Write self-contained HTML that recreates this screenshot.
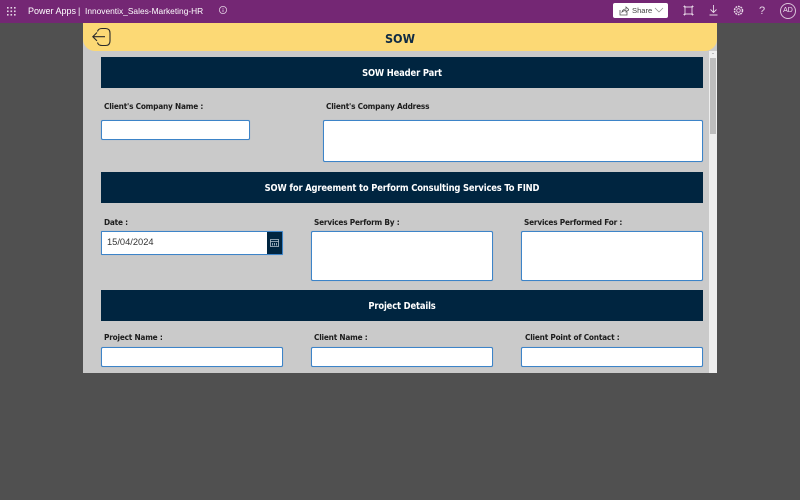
<!DOCTYPE html>
<html><head><meta charset="utf-8">
<style>
*{box-sizing:border-box;margin:0;padding:0}
html,body{width:800px;height:500px;overflow:hidden;background:#505050;font-family:"Liberation Sans",sans-serif}
.a{position:absolute}
.bar{position:absolute;left:101px;width:602px;background:#002540;color:#fff;font-family:"DejaVu Sans Condensed","DejaVu Sans",sans-serif;font-stretch:condensed;font-weight:bold;font-size:9.300px;letter-spacing:-.14px;text-align:center}
.lbl{position:absolute;font-family:"DejaVu Sans Condensed","DejaVu Sans",sans-serif;font-stretch:condensed;font-weight:bold;font-size:8.200px;letter-spacing:-.2px;color:#1c1c1c;line-height:12px;white-space:nowrap}
.in{position:absolute;background:#fff;border:1px solid #3d84c8;border-radius:2px;box-shadow:0 0 .5px #3d84c8}
</style></head>
<body>
<div class="a" style="left:0;top:0;width:800px;height:23px;background:#742774"></div>
<svg class="a" style="left:7px;top:7px" width="9" height="9" fill="#e6d6e6"><rect x="0" y="0" width="1.6" height="1.6"/><rect x="3.5" y="0" width="1.6" height="1.6"/><rect x="7" y="0" width="1.6" height="1.6"/><rect x="0" y="3.5" width="1.6" height="1.6"/><rect x="3.5" y="3.5" width="1.6" height="1.6"/><rect x="7" y="3.5" width="1.6" height="1.6"/><rect x="0" y="7" width="1.6" height="1.6"/><rect x="3.5" y="7" width="1.6" height="1.6"/><rect x="7" y="7" width="1.6" height="1.6"/></svg>
<div class="a" style="left:28px;top:5px;font-size:9px;line-height:12px;color:#fff;white-space:nowrap">Power Apps</div>
<div class="a" style="left:78px;top:5px;font-size:9px;line-height:12px;color:#fff">|</div>
<div class="a" style="left:85px;top:5px;font-size:8.400px;line-height:12px;color:#fff;white-space:nowrap">Innoventix_Sales-Marketing-HR</div>
<svg class="a" style="left:218px;top:5px" width="10" height="10" fill="none" stroke="#e0cce0" stroke-width=".8"><circle cx="5" cy="5" r="3.6"/><path d="M5 4.500v2.600M5 2.900v.9"/></svg>
<div class="a" style="left:613px;top:3px;width:55px;height:15px;background:#fff;border-radius:2px"></div>
<svg class="a" style="left:619px;top:6px" width="10" height="10" fill="none" stroke="#555" stroke-width=".8"><path d="M1 4v5h7V6M3 6c.5-2 2-3 4-3V1l3 2.700L7 6V4.500C5.500 4.500 4 5 3 6z"/></svg>
<div class="a" style="left:632px;top:5px;font-size:7.600px;line-height:12px;color:#444">Share</div>
<svg class="a" style="left:654px;top:7px" width="10" height="7" fill="none" stroke="#888" stroke-width=".7"><path d="M1 1l4 4 4-4"/></svg>
<svg class="a" style="left:683px;top:5px" width="11" height="11" fill="none" stroke="#e6d6e6" stroke-width=".9"><path d="M2 2h7v7H2z"/><path d="M.500 1.500h2M1.500.500v2M8.500 1.500h2M9.500.500v2M.500 9.500h2M1.500 8.500v2M8.500 9.500h2M9.500 8.500v2"/></svg>
<svg class="a" style="left:708px;top:5px" width="11" height="11" fill="none" stroke="#e6d6e6" stroke-width=".9"><path d="M5.500 0v7M2.500 4.500l3 3 3-3M1.500 10h8"/></svg>
<svg class="a" style="left:733px;top:5px" width="11" height="11" fill="none" stroke="#e6d6e6" stroke-width=".9"><circle cx="5.500" cy="5.500" r="1.800"/><circle cx="5.500" cy="5.500" r="4" stroke-dasharray="1.800 .8" stroke-width="1.500"/></svg>
<div class="a" style="left:759px;top:5px;font-size:11px;line-height:13px;color:#e6d6e6">?</div>
<div class="a" style="left:780px;top:3px;width:16px;height:16px;border:1px solid #d9c3d9;border-radius:50%;font-size:7px;line-height:14px;text-align:center;color:#f0e4f0">AD</div>

<div class="a" style="left:83px;top:23px;width:634px;height:350px;background:#cacaca"></div>
<div class="a" style="left:83px;top:23px;width:634px;height:28px;background:#fcd975;border-bottom-left-radius:12px;border-bottom-right-radius:12px"></div>
<svg class="a" style="left:91px;top:27px" width="21" height="21" fill="none" stroke="#2a2a2a" stroke-width="1.100"><path d="M6.500 4.500C7 2.500 8.500 1.500 11 1.500h3.500c3 0 4.500 1.500 4.500 4.500v8c0 3-1.500 4.500-4.500 4.500H11c-2.500 0-4-1-4.500-3"/><path d="M14 9.700H2M6 5.500L1.800 9.700 6 13.900"/></svg>
<div class="a" style="left:83px;top:30px;width:634px;text-align:center;font-family:'DejaVu Sans Condensed','DejaVu Sans',sans-serif;font-stretch:condensed;font-weight:bold;font-size:12.500px;line-height:17px;color:#0e2a44">SOW</div>

<div class="a" style="left:709px;top:51px;width:8px;height:322px;background:#eeeeee"></div>
<div class="a" style="left:710px;top:58px;width:6px;height:76px;background:#bdbdbd"></div>
<div class="a" style="left:710px;top:51px;width:6px;height:7px;color:#666;font-size:6px;line-height:7px;text-align:center">-</div>

<div class="bar" style="top:57px;height:31px;line-height:33px">SOW Header Part</div>
<div class="lbl" style="left:104px;top:100px">Client's Company Name :</div>
<div class="lbl" style="left:326px;top:100px">Client's Company Address</div>
<div class="in" style="left:101px;top:120px;width:149px;height:20px"></div>
<div class="in" style="left:323px;top:120px;width:380px;height:42px"></div>

<div class="bar" style="top:172px;height:31px;line-height:33px">SOW for Agreement to Perform Consulting Services To FIND</div>
<div class="lbl" style="left:104px;top:216px">Date :</div>
<div class="lbl" style="left:314px;top:216px">Services Perform By :</div>
<div class="lbl" style="left:524px;top:216px">Services Performed For :</div>
<div class="in" style="left:101px;top:231px;width:182px;height:24px;border-radius:1px"></div>
<div class="a" style="left:107px;top:236px;font-size:9.300px;line-height:13px;color:#333">15/04/2024</div>
<div class="a" style="left:267px;top:232px;width:15px;height:22px;background:#002540"></div>
<svg class="a" style="left:270px;top:239px" width="9" height="8" fill="none" stroke="#b9c6d1" stroke-width=".8"><path d="M.5.500h8v7h-8zM.500 2.500h8M2.500 4v2.500M4.500 4v2.500M6.500 4v2.500"/></svg>
<div class="in" style="left:311px;top:231px;width:182px;height:50px"></div>
<div class="in" style="left:521px;top:231px;width:182px;height:50px"></div>

<div class="bar" style="top:290px;height:31px;line-height:33px">Project Details</div>
<div class="lbl" style="left:104px;top:331px">Project Name :</div>
<div class="lbl" style="left:314px;top:331px">Client Name :</div>
<div class="lbl" style="left:525px;top:331px">Client Point of Contact :</div>
<div class="in" style="left:101px;top:347px;width:182px;height:20px"></div>
<div class="in" style="left:311px;top:347px;width:182px;height:20px"></div>
<div class="in" style="left:521px;top:347px;width:182px;height:20px"></div>
</body></html>
